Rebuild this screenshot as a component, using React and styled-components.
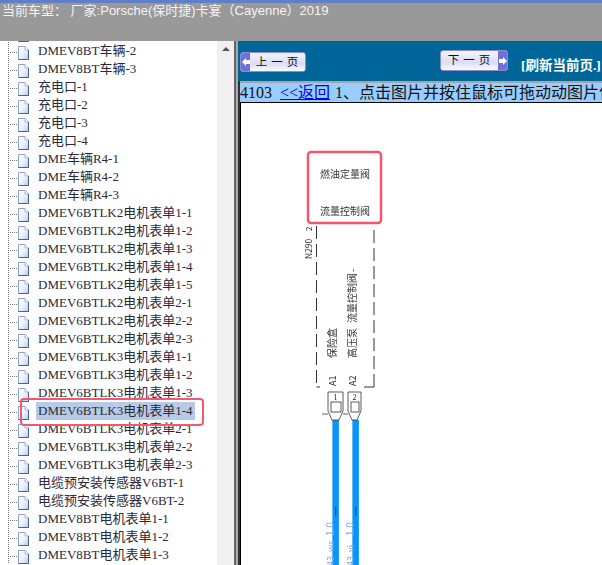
import React from 'react'
import styled, { createGlobalStyle } from 'styled-components'

const serif = '"Liberation Serif", "Noto Sans CJK SC", serif'
const cjk = '"Noto Sans CJK SC", "Liberation Sans", sans-serif'

const GlobalStyle = createGlobalStyle`
  html, body {
    margin: 0;
    padding: 0;
    background: #fff;
  }
`

const Page = styled.div`
  width: 602px;
  height: 565px;
  display: flex;
  flex-direction: column;
  overflow: hidden;
`

const TopBar = styled.div`
  height: 41px;
  flex: none;
  box-sizing: border-box;
  background: #999;
  border-top: 3px solid #5f7fc8;
  padding-left: 2px;
  color: #f4f4f4;
  font: 13px/15px "Liberation Sans", "Noto Sans CJK SC", sans-serif;
  white-space: nowrap;
`

const Main = styled.div`
  flex: 1;
  display: flex;
  min-height: 0;
`

const Sidebar = styled.div`
  width: 217px;
  flex: none;
  overflow: hidden;
  position: relative;
  background: #fff;
`

const Tree = styled.div`
  margin-top: -17px;
  background-image: linear-gradient(#777 50%, transparent 50%);
  background-size: 1px 2px;
  background-repeat: repeat-y;
  background-position: 8px 0;
`

const Row = styled.div`
  height: 18px;
  display: flex;
  align-items: center;
  font: 13px/18px ${serif};
  color: #2a2a3a;
  white-space: nowrap;
`

const Dots = styled.span`
  width: 10px;
  height: 1px;
  margin: 2px 0 0 8px;
  flex: none;
  background-image: linear-gradient(90deg, #777 50%, transparent 50%);
  background-size: 2px 1px;
`

const DocSvg = styled.svg`
  flex: none;
  margin-top: 3px;
`

const Label = styled.span`
  margin-left: ${props => (props.$selected ? '7px' : '9px')};
  padding: 0 ${props => (props.$selected ? '2px' : '0')};
  background: ${props => (props.$selected ? '#b7cbe6' : 'transparent')};
`

const Highlight = styled.div`
  position: absolute;
  left: 20px;
  top: 357px;
  width: 180px;
  height: 24px;
  border: 2.5px solid #f5586e;
  border-radius: 4px;
  pointer-events: none;
`

const Scrollbar = styled.div`
  width: 17px;
  flex: none;
  background: #f0f0f0;
  display: flex;
  justify-content: center;
  padding-top: 6px;
  box-sizing: border-box;
`

const ScrollArrow = styled.div`
  width: 0;
  height: 0;
  border-left: 4px solid transparent;
  border-right: 4px solid transparent;
  border-bottom: 4px solid #555;
`

const Splitter = styled.div`
  width: 4px;
  flex: none;
  background: linear-gradient(90deg, #666 0 50%, #a8a8a8 50% 100%);
`

const Right = styled.div`
  flex: 1;
  min-width: 0;
  display: flex;
  flex-direction: column;
  background: #333;
`

const NavBar = styled.div`
  height: 40px;
  flex: none;
  background: #006699;
  display: flex;
  align-items: flex-start;
  padding-left: 2px;
`

const NavButton = styled.div`
  width: ${props => props.$width}px;
  height: ${props => props.$height}px;
  margin-top: ${props => props.$top}px;
  margin-left: ${props => props.$left}px;
  flex: none;
  box-sizing: border-box;
  display: flex;
  flex-direction: ${props => (props.$next ? 'row-reverse' : 'row')};
  align-items: stretch;
  border: 1.5px solid #8a8ccf;
  border-radius: 3px;
  overflow: hidden;
  background: linear-gradient(#f4f4fe, #dcdcf4 60%, #fafaff);
`

const ButtonCap = styled.div`
  width: 9px;
  flex: none;
  background: #6f70dc;
  display: flex;
  align-items: center;
  justify-content: center;
`

const ButtonText = styled.div`
  flex: 1;
  text-align: center;
  font: 11.5px/16px ${cjk};
  letter-spacing: 4px;
  text-indent: 3px;
  color: #111;
`

const Refresh = styled.div`
  margin-left: 13px;
  margin-top: 17px;
  font: bold 13.5px/16px ${serif};
  color: #fff;
  white-space: nowrap;
`

const InfoRow = styled.div`
  height: 21px;
  box-sizing: border-box;
  flex: none;
  margin-left: 2px;
  border-top: 2px solid #a6a6a6;
  background: #99ccff;
  font: 16px/19px ${serif};
  color: #111;
  white-space: nowrap;
  overflow: hidden;
`

const BackLink = styled.a`
  color: #0000ee;
  text-decoration: underline;
  margin: 0 5px 0 8px;
`

const Canvas = styled.div`
  flex: 1;
  min-height: 0;
  margin-left: 2px;
  background: #fff;
  border-top: 1px solid #000;
  border-left: 1px solid #000;
  overflow: hidden;
`

const Diagram = styled.svg`
  display: block;
  filter: blur(0.4px);
`

const rows = [
  'DMEV8BT车辆-1', 'DMEV8BT车辆-2', 'DMEV8BT车辆-3',
  '充电口-1', '充电口-2', '充电口-3', '充电口-4',
  'DME车辆R4-1', 'DME车辆R4-2', 'DME车辆R4-3',
  'DMEV6BTLK2电机表单1-1', 'DMEV6BTLK2电机表单1-2', 'DMEV6BTLK2电机表单1-3',
  'DMEV6BTLK2电机表单1-4', 'DMEV6BTLK2电机表单1-5',
  'DMEV6BTLK2电机表单2-1', 'DMEV6BTLK2电机表单2-2', 'DMEV6BTLK2电机表单2-3',
  'DMEV6BTLK3电机表单1-1', 'DMEV6BTLK3电机表单1-2', 'DMEV6BTLK3电机表单1-3',
  'DMEV6BTLK3电机表单1-4',
  'DMEV6BTLK3电机表单2-1', 'DMEV6BTLK3电机表单2-2', 'DMEV6BTLK3电机表单2-3',
  '电缆预安装传感器V6BT-1', '电缆预安装传感器V6BT-2',
  'DMEV8BT电机表单1-1', 'DMEV8BT电机表单1-2', 'DMEV8BT电机表单1-3'
]

const SELECTED = 'DMEV6BTLK3电机表单1-4'

const DocIcon = () => (
  <DocSvg width="11" height="14" viewBox="0 0 11 14">
    <defs>
      <linearGradient id="doc" x1="0" y1="0" x2="1" y2="1">
        <stop offset="0" stopColor="#fff" />
        <stop offset="0.5" stopColor="#eef3fd" />
        <stop offset="1" stopColor="#b4ccf2" />
      </linearGradient>
    </defs>
    <path d="M0.5 0.5H7L10.5 4V13.5H0.5Z" fill="url(#doc)" stroke="#8fa3cf" />
    <path d="M7 0.5V4H10.5" fill="#f4f7fd" stroke="#a6b7da" />
    <path d="M0.5 13.5H10.5V4" fill="none" stroke="#45609e" />
  </DocSvg>
)

const ArrowIcon = ({ flip }) => (
  <svg width="8" height="8" viewBox="0 0 8 8" style={{ transform: flip ? 'scaleX(-1)' : 'none' }}>
    <path d="M0 4L4 0V2H8V6H4V8Z" fill="#fff" />
  </svg>
)

const Wire = ({ x, tickY }) => (
  <>
    <rect x={x} y="420" width="7" height="145" fill="#7cc4fb" />
    <rect x={x + 0.8} y="420" width="6" height="145" fill="#0994f7" />
    <rect x={x + 3} y={tickY} width="1.2" height="9" fill="#234a78" />
  </>
)

const Connector = ({ x, width, digit }) => (
  <g fill="none" stroke="#333" strokeWidth="0.8">
    <path d={`M${x} 392H${x + width}V411L${x + width - 4} 420H${x + 4}L${x} 411Z`} />
    <rect x={x + 3} y="402" width={width - 5} height="10" />
    <text x={x + width / 2} y="400" fontSize="8" fill="#222" stroke="none" textAnchor="middle">{digit}</text>
  </g>
)

const VText = ({ x, y, size = 10, color = '#333', children }) => (
  <text transform={`translate(${x} ${y}) rotate(-90)`} fontSize={size} fill={color} fontFamily={cjk}>
    {children}
  </text>
)

const WiringDiagram = () => (
  <Diagram width="361" height="462" viewBox="241 103 361 462">
    <g stroke="#333" strokeWidth="1" fill="none" strokeDasharray="13 5">
      <path d="M316.5 226V387" />
      <path d="M374 230V387" />
    </g>
    <path d="M316.5 387H320M364 387H374" stroke="#333" strokeWidth="1" />
    <VText x={312} y={231} size={8}>2</VText>
    <VText x={312} y={259} size={8.5}>N290</VText>
    <VText x={336} y={358}>保险盒</VText>
    <VText x={356} y={358}>高压泵</VText>
    <VText x={356} y={323}>流量控制阀</VText>
    <VText x={356} y={272}>-</VText>
    <VText x={336} y={386} size={9} color="#222">A1</VText>
    <VText x={356} y={386} size={9} color="#222">A2</VText>
    <Wire x={332} tickY={507} />
    <Wire x={352} tickY={507} />
    <Connector x={328} width={15} digit="1" />
    <Connector x={348} width={13} digit="2" />
    <path d="M322 414H328M343 414H348" stroke="#333" strokeWidth="0.8" />
    <VText x={334} y={536} size={10} color="#7b9fd6">1.0</VText>
    <VText x={354} y={536} size={10} color="#7b9fd6">1.0</VText>
    <VText x={334} y={552} size={9} color="#7b9fd6">ws</VText>
    <VText x={354} y={552} size={9} color="#7b9fd6">vi</VText>
    <VText x={334} y={566} size={9} color="#7b9fd6">43</VText>
    <VText x={354} y={566} size={9} color="#7b9fd6">43</VText>
    <text x={345} y={178} fontSize="10" fill="#333" textAnchor="middle" fontFamily={cjk}>燃油定量阀</text>
    <text x={345} y={215} fontSize="10" fill="#333" textAnchor="middle" fontFamily={cjk}>流量控制阀</text>
    <rect x="308" y="152" width="73" height="71" rx="3" fill="none" stroke="#f2566c" strokeWidth="2.5" />
  </Diagram>
)

const App = () => (
  <Page>
    <GlobalStyle />
    <TopBar>当前车型： 厂家:Porsche(保时捷)卡宴（Cayenne）2019</TopBar>
    <Main>
      <Sidebar>
        <Tree>
          {rows.map(name => (
            <Row key={name}>
              <Dots />
              <DocIcon />
              <Label $selected={name === SELECTED}>{name}</Label>
            </Row>
          ))}
        </Tree>
        <Highlight />
      </Sidebar>
      <Scrollbar>
        <ScrollArrow />
      </Scrollbar>
      <Splitter />
      <Right>
        <NavBar>
          <NavButton $width={66} $height={20} $top={11} $left={0}>
            <ButtonCap><ArrowIcon /></ButtonCap>
            <ButtonText>上一页</ButtonText>
          </NavButton>
          <NavButton $next $width={68} $height={21} $top={9} $left={134}>
            <ButtonCap><ArrowIcon flip /></ButtonCap>
            <ButtonText>下一页</ButtonText>
          </NavButton>
          <Refresh>[刷新当前页.]</Refresh>
        </NavBar>
        <InfoRow>
          4103<BackLink>&lt;&lt;返回</BackLink>1、点击图片并按住鼠标可拖动动图片位置
        </InfoRow>
        <Canvas>
          <WiringDiagram />
        </Canvas>
      </Right>
    </Main>
  </Page>
)

export default App
